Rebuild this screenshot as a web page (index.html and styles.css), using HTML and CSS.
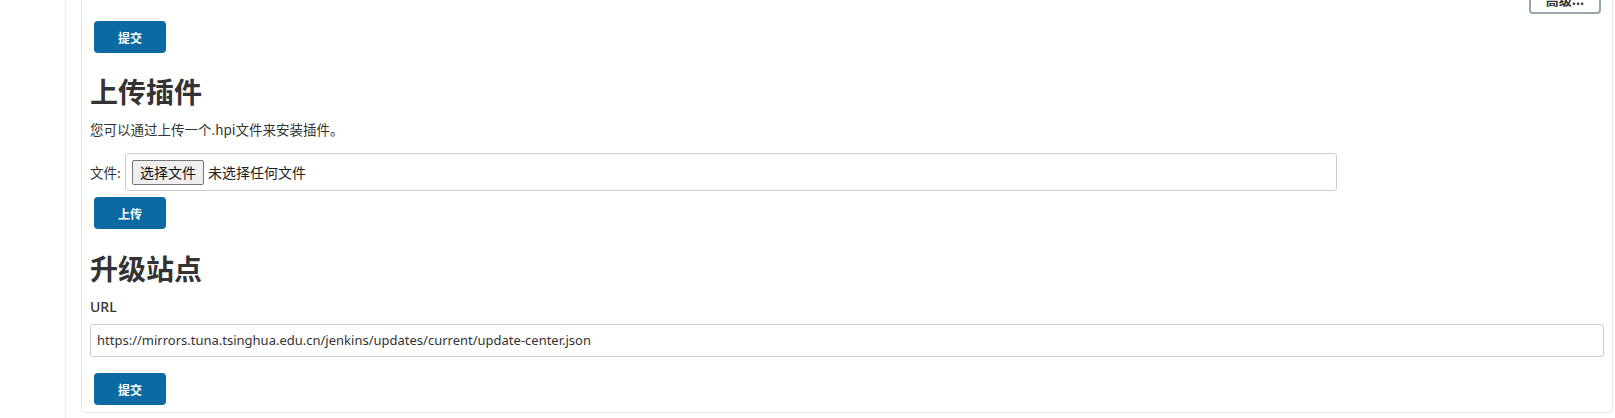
FILE: index.html
```html
<!DOCTYPE html>
<html lang="zh-CN">
<head>
<meta charset="utf-8">
<title>插件管理</title>
<link rel="stylesheet" href="styles.css">
</head>
<body>
<div class="layout">
  <aside class="sidebar"></aside>
  <main class="main">
    <section class="panel">
      <div class="adv-row"><button class="btn-adv">高级...</button></div>
      <button class="btn-primary first">提交</button>

      <h2 class="section-title">上传插件</h2>
      <p class="desc">您可以通过上传一个.hpi文件来安装插件。</p>
      <div class="file-row">
        <span class="file-label">文件:</span>
        <div class="file-box">
          <span class="file-btn">选择文件</span>
          <span class="file-none">未选择任何文件</span>
        </div>
      </div>
      <button class="btn-primary upload">上传</button>

      <h2 class="section-title second">升级站点</h2>
      <div class="field-label">URL</div>
      <div class="url-input">https://mirrors.tuna.tsinghua.edu.cn/jenkins/updates/current/update-center.json</div>
      <button class="btn-primary last">提交</button>
    </section>
  </main>
</div>
</body>
</html>
```

FILE: styles.css
```css
html, body {
  margin: 0;
  padding: 0;
  background: #ffffff;
  height: 100%;
  overflow: hidden;
}

body {
  font-family: "Noto Sans", "Noto Sans CJK SC", sans-serif;
  color: #333333;
  font-size: 14px;
}

.layout {
  display: flex;
  height: 418px;
}

.sidebar {
  width: 65px;
  flex: 0 0 65px;
  border-right: 1px solid #ececec;
}

.main {
  flex: 1;
  padding-left: 15px;
  padding-right: 2px;
}

.panel {
  margin-top: -18px;
  border: 1px solid #e3e6e9;
  border-radius: 4px;
  padding: 1px 8px 7px 8px;
  display: flex;
  flex-direction: column;
  align-items: flex-start;
}

.adv-row {
  align-self: stretch;
  display: flex;
  justify-content: flex-end;
  height: 30px;
}

.btn-adv {
  width: 72px;
  height: 30px;
  margin-right: 3px;
  border: 2px solid #9aa4ad;
  border-radius: 4px;
  background: #ffffff;
  color: #333333;
  font-family: "Noto Sans CJK SC", sans-serif;
  font-size: 13px;
  font-weight: 600;
}

.btn-primary {
  width: 72px;
  height: 32px;
  margin-left: 4px;
  border: none;
  border-radius: 4px;
  background: #0b6aa2;
  color: #ffffff;
  font-family: "Noto Sans CJK SC", sans-serif;
  font-size: 12px;
  font-weight: 700;
  padding: 0;
}

.btn-primary.first {
  margin-top: 7px;
}

.section-title {
  margin: 21px 0 0 0;
  font-family: "Noto Sans CJK SC", sans-serif;
  font-size: 28px;
  line-height: 34px;
  font-weight: 700;
  color: #333333;
}

.section-title.second {
  margin-top: 22px;
}

.desc {
  margin: 11px 0 0 0;
  font-family: "Noto Sans CJK SC", sans-serif;
  font-size: 13.5px;
  line-height: 20px;
}

.file-row {
  align-self: stretch;
  display: flex;
  align-items: center;
  margin-top: 14px;
}

.file-label {
  font-family: "Noto Sans CJK SC", sans-serif;
  font-size: 13.5px;
  width: 35px;
}

.file-box {
  width: 1204px;
  height: 36px;
  border: 1px solid #cccccc;
  border-radius: 3px;
  display: flex;
  align-items: center;
  padding-left: 6px;
  box-sizing: content-box;
}

.file-btn {
  box-sizing: border-box;
  width: 72px;
  height: 25px;
  border: 1px solid #767676;
  border-radius: 2px;
  background: #efefef;
  font-family: "Noto Sans CJK SC", sans-serif;
  font-size: 14px;
  line-height: 23px;
  text-align: center;
  color: #111111;
}

.file-none {
  margin-left: 4px;
  font-family: "Noto Sans CJK SC", sans-serif;
  font-size: 14px;
  color: #222222;
}

.btn-primary.upload {
  margin-top: 6px;
}

.field-label {
  margin-top: 12px;
  font-size: 14px;
  font-weight: 500;
  line-height: 20px;
}

.url-input {
  align-self: stretch;
  box-sizing: border-box;
  margin-top: 7px;
  height: 33px;
  border: 1px solid #cccccc;
  border-radius: 3px;
  padding: 0 6px;
  font-size: 13px;
  line-height: 31px;
  color: #333333;
}

.btn-primary.last {
  margin-top: 16px;
}
```
